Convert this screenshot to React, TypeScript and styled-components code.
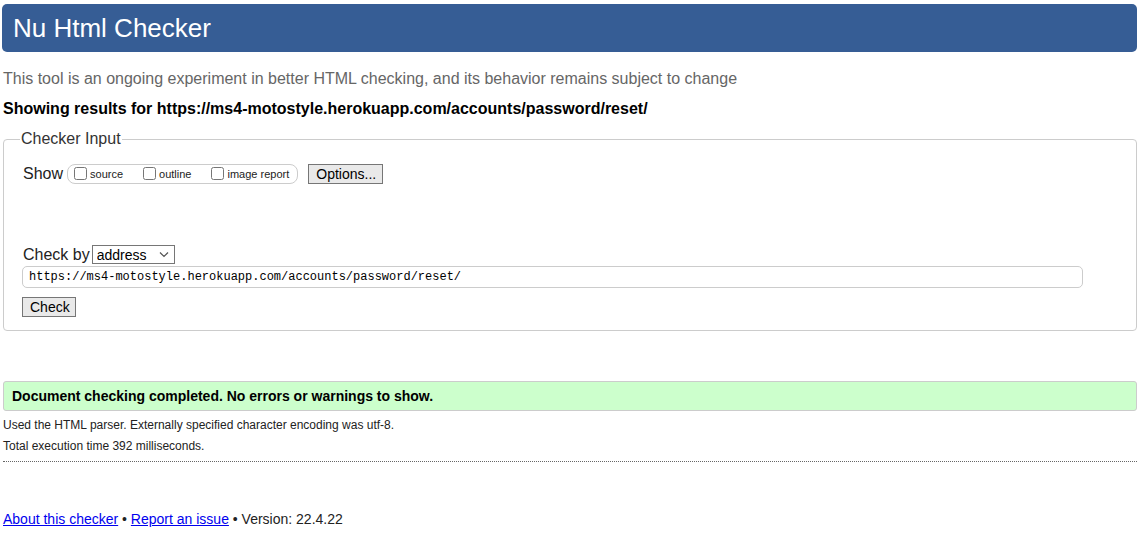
import React from "react";
import styled, { createGlobalStyle } from "styled-components";

const GlobalStyle = createGlobalStyle`
  html, body {
    margin: 0;
    padding: 0;
    background: #fff;
    color: #000;
    font-family: "Liberation Sans", Arial, sans-serif;
  }
`;

const Page = styled.div`
  padding: 4px 6px 0 2px;
`;

const Header = styled.header`
  height: 48px;
  display: flex;
  align-items: center;
  background-color: #365d95;
  border-radius: 5px;
  padding-left: 11px;
`;

const Title = styled.h1`
  margin: 0;
  font-size: 26px;
  font-weight: normal;
  color: #fff;
`;

const Intro = styled.p`
  margin: 18px 0 0 1px;
  font-size: 16px;
  line-height: 18px;
  color: #666;
`;

const Results = styled.p`
  margin: 12px 0 0 1px;
  font-size: 16px;
  line-height: 18px;
  font-weight: bold;
`;

const Fieldset = styled.fieldset`
  margin: 12px 0 0 1px;
  padding: 16px 18px 13px 18px;
  border: 1px solid #ccc;
  border-radius: 4px;
`;

const Legend = styled.legend`
  padding: 0 1px;
  margin-left: -2px;
  font-size: 16px;
  line-height: 18px;
  color: #333;
`;

const Row = styled.div<{ $top: number }>`
  display: flex;
  align-items: center;
  margin-top: ${(p) => p.$top}px;
`;

const FieldLabel = styled.span`
  font-size: 16px;
  color: #222;
  margin-left: 1px;
`;

const Pill = styled.div`
  display: flex;
  align-items: center;
  height: 18px;
  margin-left: 4px;
  padding: 0 8px 0 6px;
  border: 1px solid #ccc;
  border-radius: 8px;
`;

const Option = styled.label<{ $gap: number }>`
  display: flex;
  align-items: center;
  margin-right: ${(p) => p.$gap}px;
  font-size: 11px;
  color: #222;
`;

const Box = styled.input`
  width: 13px;
  height: 13px;
  margin: 0 3px 1px 0;
`;

const Button = styled.button`
  height: 20px;
  padding: 0 7px;
  font-family: "Liberation Sans", Arial, sans-serif;
  font-size: 14px;
  color: #000;
  background: #e9e9e9;
  border: 1px solid #767676;
  border-radius: 0;
`;

const OptionsButton = styled(Button)`
  margin-left: 10px;
  width: 75px;
`;

const SelectWrap = styled.div`
  position: relative;
  margin-left: 2px;
`;

const Select = styled.select`
  appearance: none;
  width: 83px;
  height: 19px;
  padding: 0 0 0 4px;
  border: 1px solid #767676;
  border-radius: 0;
  background: #fff;
  font-family: "Liberation Sans", Arial, sans-serif;
  font-size: 14px;
  color: #000;
`;

const Chevron = styled.svg`
  position: absolute;
  right: 6px;
  top: 6px;
  pointer-events: none;
`;

const UrlInput = styled.input`
  display: block;
  box-sizing: border-box;
  width: 1061px;
  height: 22px;
  margin: 2px 0 0 0;
  padding: 0 6px;
  border: 1px solid #ccc;
  border-radius: 5px;
  font-family: "Liberation Mono", "Courier New", monospace;
  font-size: 12px;
  color: #000;
`;

const CheckButton = styled(Button)`
  display: block;
  width: 54px;
  margin-top: 9px;
`;

const Success = styled.div`
  margin: 50px 0 0 1px;
  height: 28px;
  display: flex;
  align-items: center;
  padding-left: 8px;
  background: #ccffcc;
  border: 1px solid #ccc;
  border-radius: 3px;
  font-size: 14px;
  font-weight: bold;
`;

const Note = styled.p<{ $top: number }>`
  margin: ${(p) => p.$top}px 0 0 1px;
  font-size: 12px;
  line-height: 14px;
  color: #222;
`;

const Divider = styled.hr`
  margin: 8px 0 0 1px;
  border: 0;
  border-top: 1px dotted #666;
`;

const Footer = styled.p`
  margin: 49px 0 0 1px;
  font-size: 14px;
  line-height: 16px;
  color: #222;
`;

const Link = styled.a`
  color: #0000ee;
  text-decoration: underline;
`;

const url = "https://ms4-motostyle.herokuapp.com/accounts/password/reset/";

export default function App() {
  return (
    <Page>
      <GlobalStyle />
      <Header>
        <Title>Nu Html Checker</Title>
      </Header>
      <Intro>
        This tool is an ongoing experiment in better HTML checking, and its behavior remains subject to change
      </Intro>
      <Results>Showing results for {url}</Results>
      <Fieldset>
        <Legend>Checker Input</Legend>
        <Row $top={0}>
          <FieldLabel>Show</FieldLabel>
          <Pill>
            <Option $gap={20}>
              <Box type="checkbox" />
              source
            </Option>
            <Option $gap={20}>
              <Box type="checkbox" />
              outline
            </Option>
            <Option $gap={0}>
              <Box type="checkbox" />
              image report
            </Option>
          </Pill>
          <OptionsButton type="button">Options...</OptionsButton>
        </Row>
        <Row $top={61}>
          <FieldLabel>Check by</FieldLabel>
          <SelectWrap>
            <Select defaultValue="address">
              <option value="address">address</option>
            </Select>
            <Chevron width="10" height="7" viewBox="0 0 10 7">
              <path d="M1 1.5 L5 5.5 L9 1.5" fill="none" stroke="#555" strokeWidth="1.2" />
            </Chevron>
          </SelectWrap>
        </Row>
        <UrlInput type="url" defaultValue={url} />
        <CheckButton type="button">Check</CheckButton>
      </Fieldset>
      <Success>Document checking completed. No errors or warnings to show.</Success>
      <Note $top={7}>Used the HTML parser. Externally specified character encoding was utf-8.</Note>
      <Note $top={7}>Total execution time 392 milliseconds.</Note>
      <Divider />
      <Footer>
        <Link href="#">About this checker</Link> • <Link href="#">Report an issue</Link> • Version: 22.4.22
      </Footer>
    </Page>
  );
}
